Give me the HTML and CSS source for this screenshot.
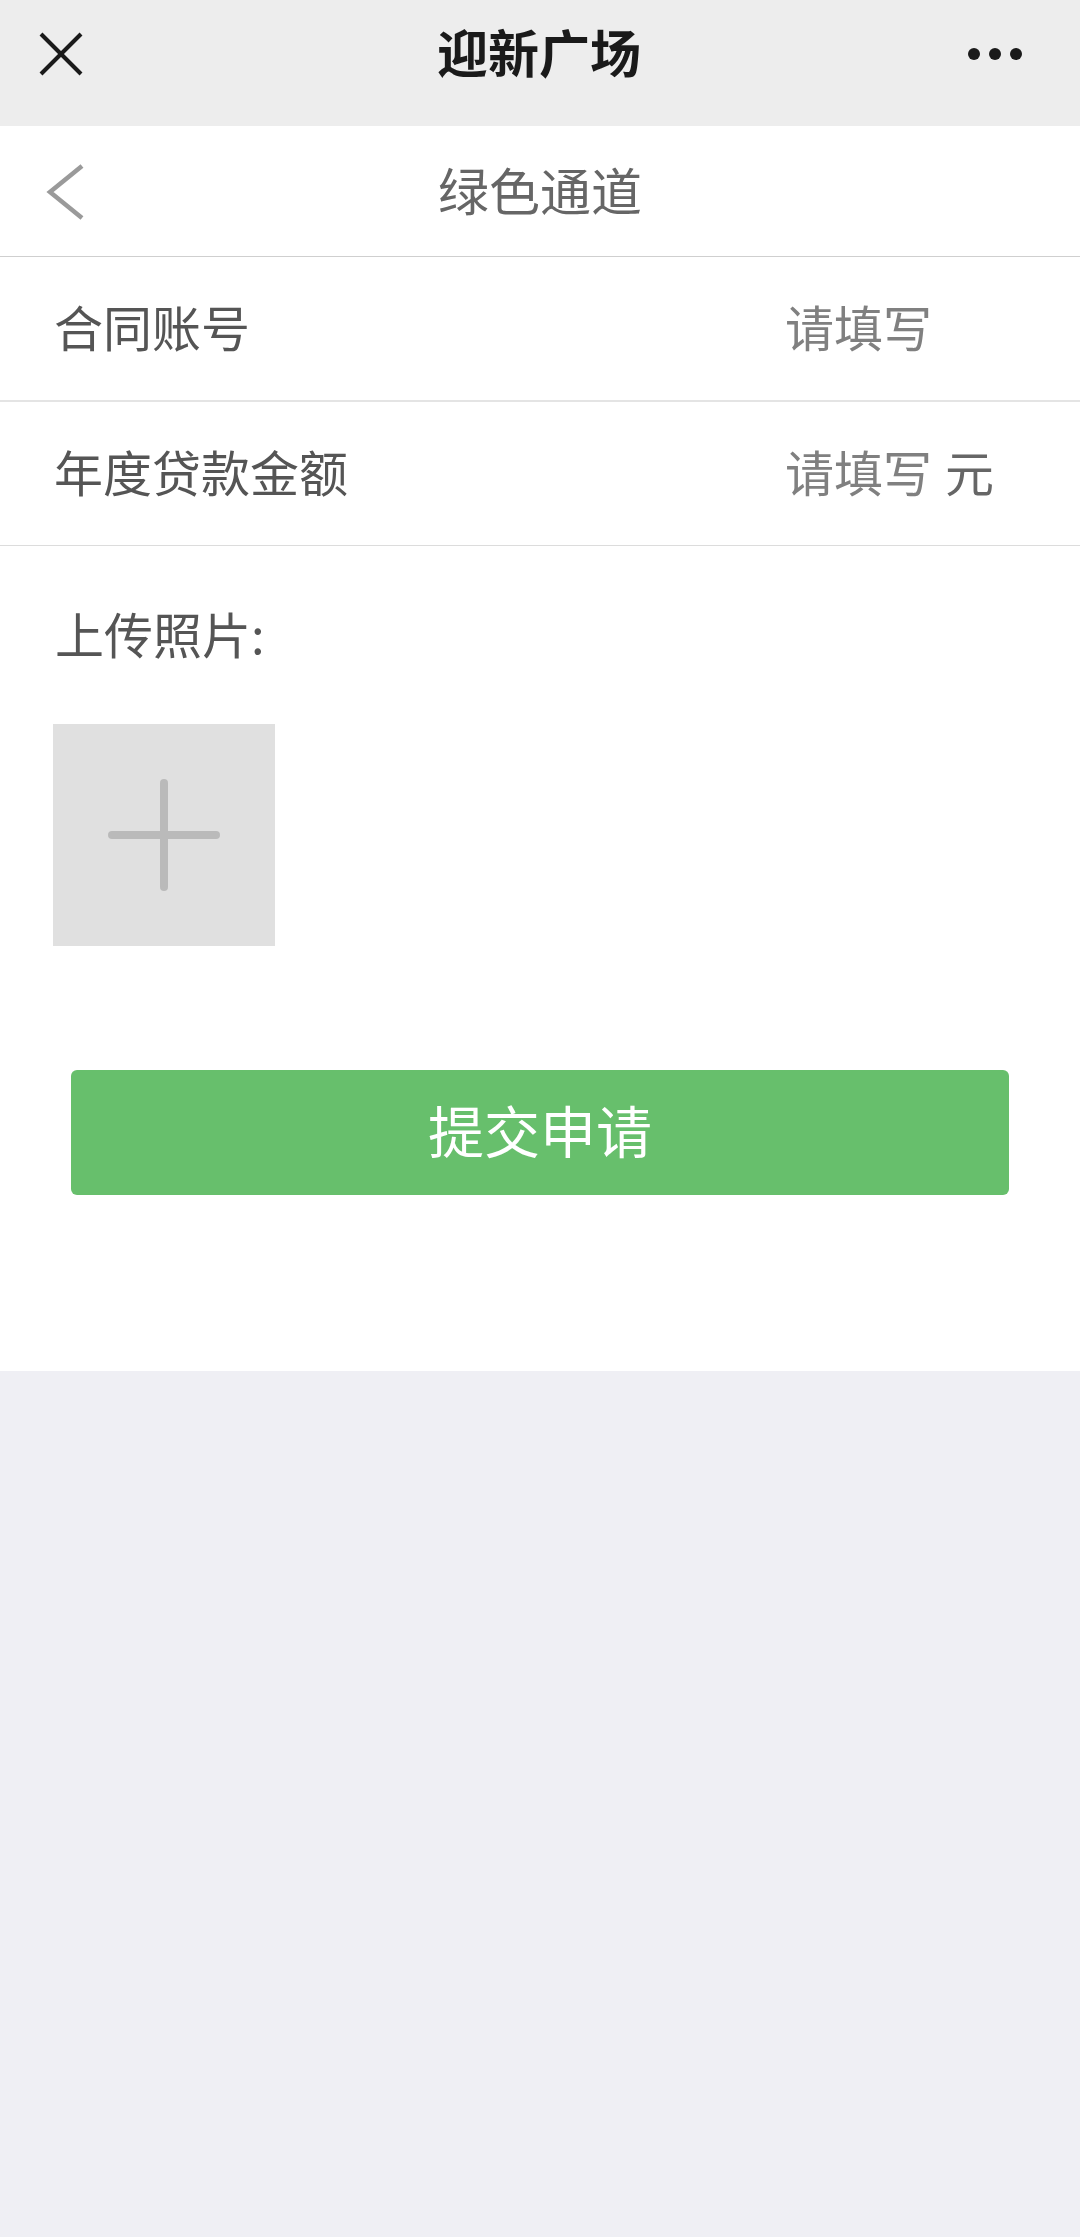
FILE: index.html
```html
<!DOCTYPE html>
<html lang="zh-CN">
<head>
  <meta charset="UTF-8">
  <meta name="viewport" content="width=device-width, initial-scale=1.0">
  <title>绿色通道</title>
  <link rel="stylesheet" href="styles.css">
</head>
<body>
  <header class="topbar">
    <span class="topbar-close">
      <svg width="44" height="44" viewBox="0 0 44 44">
        <line x1="2" y1="2" x2="42" y2="42" stroke="#1a1a1a" stroke-width="4"/>
        <line x1="42" y1="2" x2="2" y2="42" stroke="#1a1a1a" stroke-width="4"/>
      </svg>
    </span>
    <h1 class="topbar-title">迎新广场</h1>
    <span class="topbar-more">
      <i></i><i></i><i></i>
    </span>
  </header>

  <main class="page">
    <nav class="navbar">
      <span class="navbar-back">
        <svg width="40" height="56" viewBox="0 0 40 56">
          <polyline points="36,2 4,28 36,54" fill="none" stroke="#9a9a9a" stroke-width="4.5"/>
        </svg>
      </span>
      <h2 class="navbar-title">绿色通道</h2>
    </nav>

    <div class="field">
      <label class="field-label">合同账号</label>
      <div class="field-value">
        <input type="text" placeholder="请填写">
      </div>
    </div>

    <div class="field field-last">
      <label class="field-label">年度贷款金额</label>
      <div class="field-value">
        <input type="text" placeholder="请填写">
        <span class="field-unit">元</span>
      </div>
    </div>

    <section class="upload">
      <p class="upload-label">上传照片:</p>
      <div class="upload-box">
        <svg width="112" height="112" viewBox="0 0 112 112">
          <line x1="4" y1="56" x2="108" y2="56" stroke="#bababa" stroke-width="8" stroke-linecap="round"/>
          <line x1="56" y1="4" x2="56" y2="108" stroke="#bababa" stroke-width="8" stroke-linecap="round"/>
        </svg>
      </div>
      <button class="submit">提交申请</button>
    </section>
  </main>
</body>
</html>
```

FILE: styles.css
```css
body {
  margin: 0;
  background: #efeff4;
  font-family: "Noto Sans CJK SC", "Noto Sans", sans-serif;
  color: #555;
}
.topbar {
  height: 126px;
  background: #ededed;
  display: flex;
  align-items: center;
  justify-content: space-between;
  padding: 0 58px 0 39px;
  box-sizing: border-box;
}
.topbar-close {
  display: flex;
  width: 77px;
  margin-top: -18px;
}
.topbar-title {
  margin: -24px 0 0;
  font-size: 51px;
  font-weight: bold;
  color: #1a1a1a;
}
.topbar-more {
  display: flex;
  gap: 9px;
  width: 60px;
  justify-content: flex-end;
  margin-top: -18px;
}
.topbar-more i {
  width: 12px;
  height: 12px;
  border-radius: 50%;
  background: #1a1a1a;
}
.page {
  background: #fff;
}
.navbar {
  height: 130px;
  border-bottom: 1px solid #cfcfcf;
  display: flex;
  align-items: center;
  justify-content: center;
  position: relative;
}
.navbar-back {
  position: absolute;
  left: 46px;
  top: 38px;
  display: flex;
}
.navbar-title {
  margin: -5px 0 0;
  font-size: 51px;
  font-weight: normal;
  color: #666;
}
.field {
  height: 137px;
  padding: 0 0 6px 54px;
  border-bottom: 2px solid #e4e4e4;
  display: flex;
  align-items: center;
}
.field-last {
  border-bottom-width: 1px;
  border-bottom-color: #dcdcdc;
}
.field-label {
  flex: 1;
  font-size: 49px;
  color: #555;
}
.field-value {
  width: 295px;
  display: flex;
  align-items: center;
}
.field-value input {
  width: 148px;
  border: none;
  padding: 0;
  font-family: inherit;
  font-size: 49px;
  color: #555;
  background: transparent;
  outline: none;
}
.field-value input::placeholder {
  color: #808080;
}
.field-unit {
  margin-left: 12px;
  font-size: 49px;
  color: #666;
}
.upload {
  padding: 54px 0 176px;
}
.upload-label {
  margin: 0 0 58px 55px;
  font-size: 49px;
  line-height: 66px;
  color: #555;
}
.upload-box {
  width: 222px;
  height: 222px;
  margin-left: 53px;
  background: #e0e0e0;
  display: flex;
  align-items: center;
  justify-content: center;
}
.submit {
  display: block;
  width: 938px;
  height: 125px;
  margin: 124px 0 0 71px;
  padding: 0 0 8px;
  border: none;
  border-radius: 6px;
  background: #67bf6c;
  color: #fff;
  font-family: inherit;
  font-size: 56px;
  cursor: pointer;
}
```
